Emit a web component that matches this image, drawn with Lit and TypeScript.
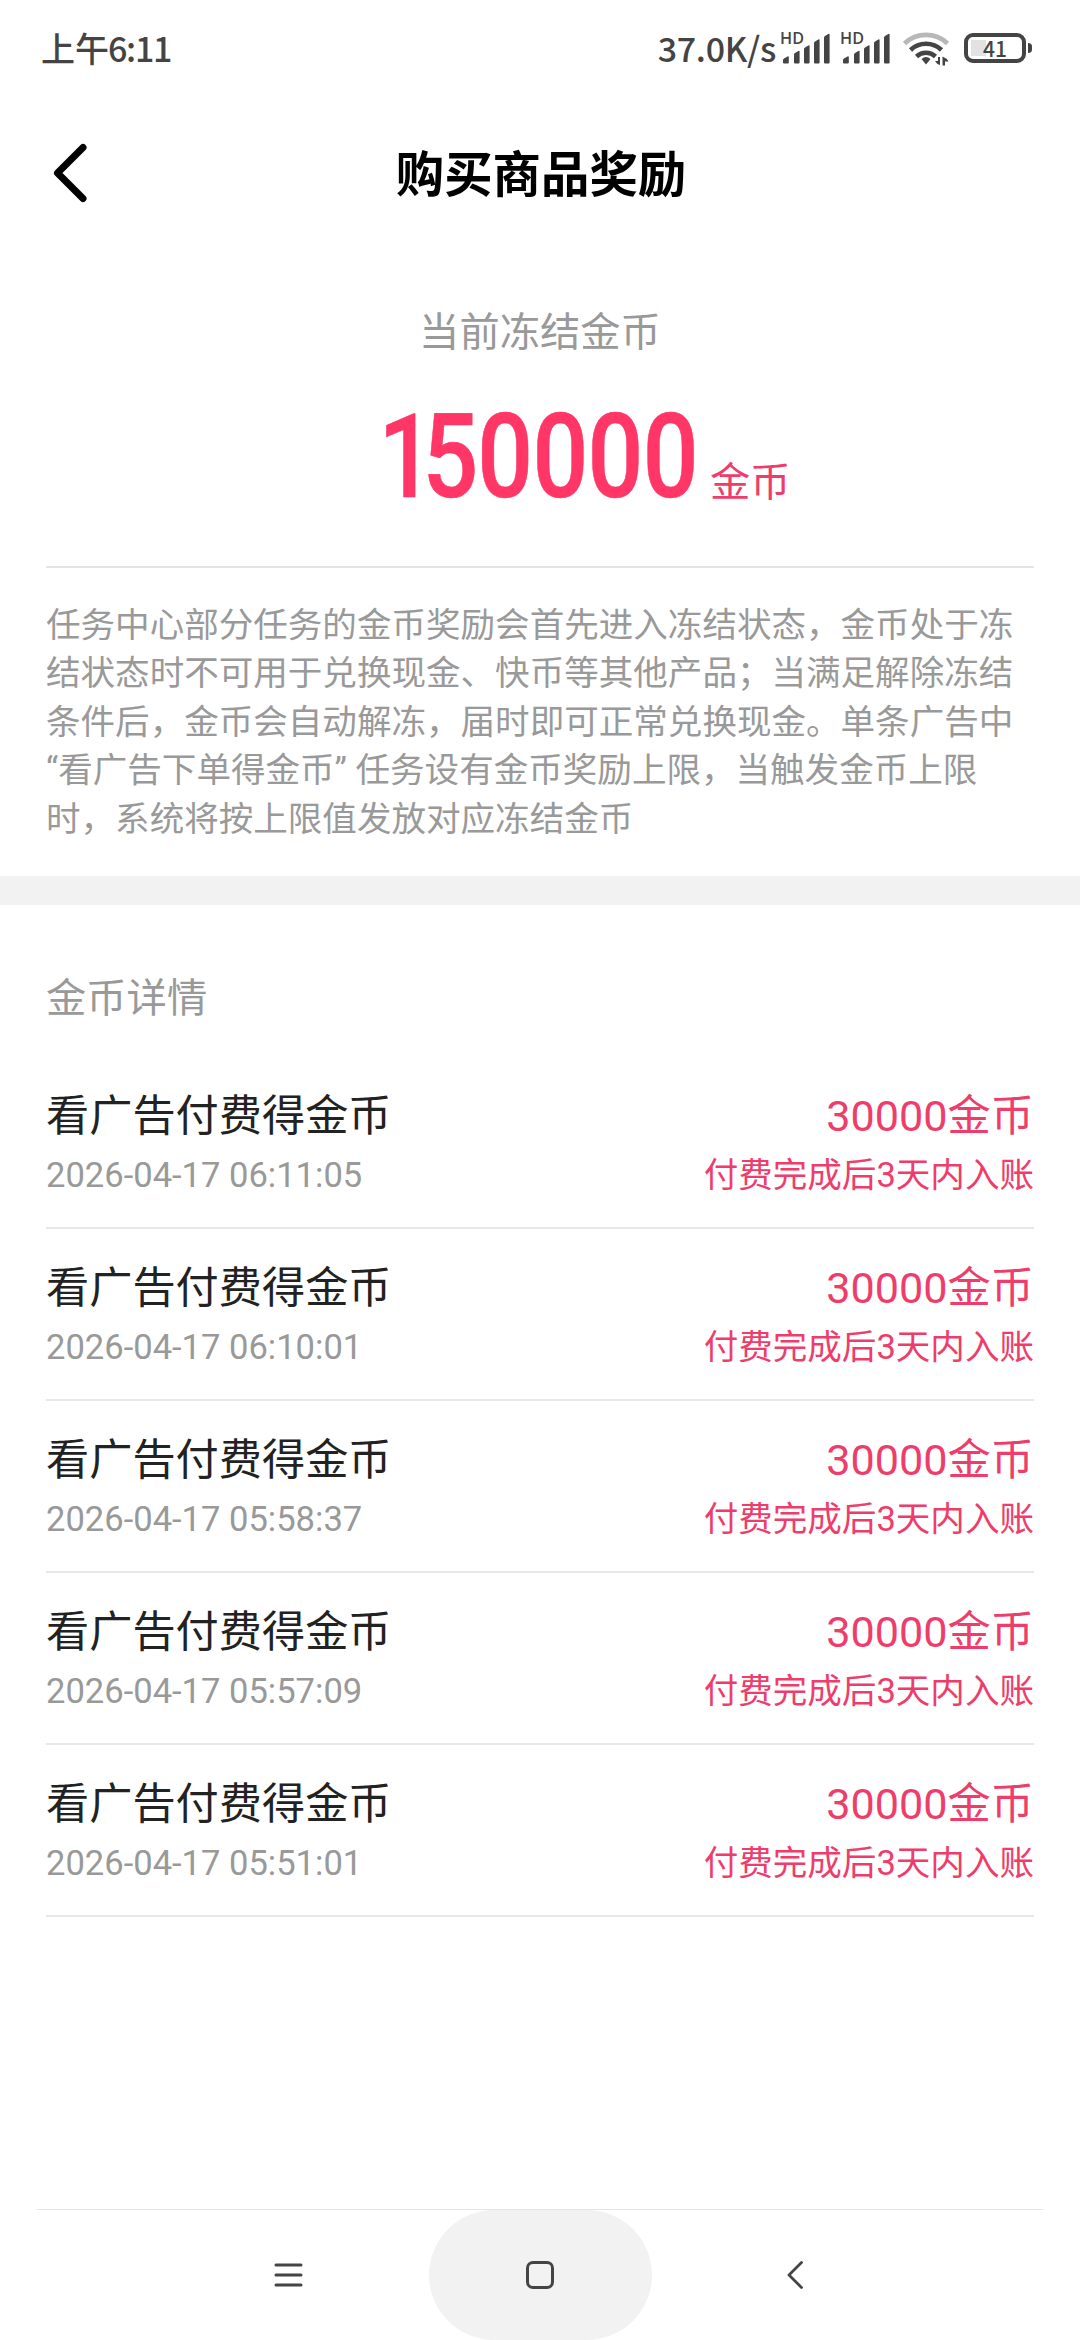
import { LitElement, html, css, svg } from "lit";
import { customElement } from "lit/decorators.js";

const signalBars = svg`
  <path d="M2 27.500v-2.500q0-1 1-1.500l3.500-2q1.300-.5 1.300.5v5.500q0 1-1 1h-3.800q-1 0-1-1z"/>
  <path d="M13 27.500v-8q0-1 1-1.500l3.300-2q1.300-.6 1.300.5v11q0 1-1 1h-3.600q-1 0-1-1z"/>
  <path d="M23 27.500v-13.500q0-1 1-1.500l3.300-2q1.300-.6 1.300.5v16.500q0 1-1 1h-3.600q-1 0-1-1z"/>
  <path d="M33 27.500v-19.500q0-1 1-1.500l3.300-2q1.300-.6 1.300.5v22.500q0 1-1 1h-3.600q-1 0-1-1z"/>
  <path d="M43 27.500v-25q0-1 1-1.500l3.300-2q1.300-.6 1.300.5v28q0 1-1 1h-3.600q-1 0-1-1z"/>`;

const records = [
  "2026-04-17 06:11:05",
  "2026-04-17 06:10:01",
  "2026-04-17 05:58:37",
  "2026-04-17 05:57:09",
  "2026-04-17 05:51:01",
];

@customElement("app-root")
export class AppRoot extends LitElement {
  static styles = css`
    :host {
      display: flex;
      flex-direction: column;
      width: 1080px;
      height: 2340px;
      overflow: hidden;
      background: #fff;
      color: #222;
      font-family: Roboto, "Noto Sans CJK SC", sans-serif;
    }
    * { box-sizing: border-box; }
    svg { display: block; overflow: visible; flex: none; }
    .status {
      display: flex;
      align-items: center;
      height: 96px;
      padding: 0 48px 0 41px;
      color: #444;
      font: 500 34px/40px "Noto Sans CJK SC", sans-serif;
    }
    .time { flex: 1; white-space: nowrap; }
    .clock { letter-spacing: -1.3px; margin-left: -1px; }
    .status svg { fill: #444; }
    .speed { letter-spacing: -.3px; margin-right: 5px; }
    .bars { margin-right: 10px; }
    .hd { font: 600 16.800px "Open Sans", sans-serif; }
    .wifi { margin: 0 15px 0 2px; }
    .charge { font: 500 22px "Noto Sans CJK SC", sans-serif; }
    .head {
      display: grid;
      grid-template-columns: 120px 1fr 120px;
      align-items: center;
      height: 154px;
    }
    .back { margin-left: 54px; }
    .title {
      margin: 0;
      padding: 5px 0 0 2px;
      text-align: center;
      color: #000;
      font-size: 48.4px;
      line-height: 60px;
      font-weight: 700;
    }
    .summary { padding: 53px 46px 0; height: 316px; }
    .label { color: #999; font-size: 40.3px; line-height: 60px; text-align: center; }
    .total {
      display: grid;
      grid-template-columns: 1fr 304px 1fr;
      height: 154px;
      margin-top: 33px;
      color: #ff3666;
    }
    .total svg { grid-column: 2; }
    .digits { font: 500 117px Roboto, sans-serif; fill: #ff3666; stroke: #ff3666; stroke-width: .6px; }
    .unit { color: #ee3d6b; font-size: 40.3px; line-height: 60px; padding: 57px 0 0 18px; }
    .rule { height: 2px; margin: 0 46px; background: #e4e4e4; }
    .note {
      margin: 0;
      height: 308px;
      padding: 33px 46px 0;
      color: #999;
      font-size: 34.56px;
      line-height: 48.4px;
    }
    .band { height: 29px; background: #f2f2f2; }
    .list { flex: 1; padding: 64px 46px 0; }
    .caption { color: #999; font-size: 40.3px; line-height: 60px; height: 88px; }
    .row {
      display: flex;
      justify-content: space-between;
      height: 172px;
      padding-top: 30px;
      border-bottom: 2px solid #e8e8e8;
      white-space: nowrap;
    }
    .name { font-size: 43.2px; line-height: 60px; }
    .sub { font-size: 34.56px; line-height: 48px; margin-top: 4px; color: #999; }
    .right { text-align: right; color: #ee3d6b; }
    .right .sub { color: #ee3d6b; }
    .nav {
      display: grid;
      grid-template-columns: 1fr 223px 1fr;
      height: 131px;
      margin: 0 37px;
      border-top: 1px solid #e4e4e4;
    }
    .key { display: flex; align-items: center; justify-content: center; }
    .home { background: #f2f2f2; border-radius: 65px; }
    .menu { justify-content: flex-start; padding-left: 237px; }
    .prev { justify-content: flex-end; padding-right: 240px; }
    .nav svg, .back { fill: none; stroke: #444; stroke-linecap: round; stroke-linejoin: round; }
    .back { stroke: #000; }
  `;

  render() {
    return html`
      <div class="status">
        <span class="time">上午<span class="clock">6:11</span></span>
        <span class="speed">37.0K/s</span>
        ${[0, 1].map(() => html`
          <svg class="bars" width="50" height="32" viewBox="0 -3 50 32">
            <text class="hd" x="-1" y="9" textLength="24" lengthAdjust="spacingAndGlyphs">HD</text>${signalBars}
          </svg>`)}
        <svg class="wifi" width="46" height="34" viewBox="0 0 46 34">
          <g fill="none" stroke="#444" stroke-width="4.600">
            <path d="M1.500 12.500a31 31 0 0 1 43 0" stroke="#b8b8b8"/>
            <path d="M7.500 19a22.500 22.500 0 0 1 31 0"/>
            <path d="M13.500 25.500a14 14 0 0 1 19 0"/>
          </g>
          <path d="M18.500 28q4.500-4 9 0l-4.500 5.500z"/>
          <path d="M37 26v8q-3.500-1-5-4h3v-4zM39.500 34.500v-9q4 1.500 6 5h-3.500v4z"/>
        </svg>
        <svg width="68" height="30" viewBox="0 0 68 30">
          <rect x="7" y="7" width="15" height="16" fill="#e2e2e2"/>
          <rect x="2" y="2" width="58" height="26" rx="7" fill="none" stroke="#444" stroke-width="4"/>
          <path d="M64 10q4 0 4 3.500v3q0 3.500-4 3.500z"/>
          <text class="charge" x="31" y="24" text-anchor="middle" textLength="24" lengthAdjust="spacingAndGlyphs">41</text>
        </svg>
      </div>
      <div class="head">
        <svg class="back" width="33" height="58" viewBox="0 0 33 58">
          <path d="M29 3.500L3.500 29L29 54.500" stroke-width="7"/>
        </svg>
        <h1 class="title">购买商品奖励</h1>
      </div>
      <div class="summary">
        <div class="label">当前冻结金币</div>
        <div class="total">
          <svg width="304" height="110" viewBox="0 0 304 110">
            <text class="digits" y="100.500" transform="scale(.84 1)" x="-11.500 41 106.200 171.900 237.600 303.200">150000</text>
          </svg>
          <span class="unit">金币</span>
        </div>
      </div>
      <div class="rule"></div>
      <p class="note">任务中心部分任务的金币奖励会首先进入冻结状态，金币处于冻结状态时不可用于兑换现金、快币等其他产品；当满足解除冻结条件后，金币会自动解冻，届时即可正常兑换现金。单条广告中<br>“看广告下单得金币” 任务设有金币奖励上限，当触发金币上限时，系统将按上限值发放对应冻结金币</p>
      <div class="band"></div>
      <div class="list">
        <div class="caption">金币详情</div>
        ${records.map((time) => html`
          <div class="row">
            <div>
              <div class="name">看广告付费得金币</div>
              <div class="sub">${time}</div>
            </div>
            <div class="right">
              <div class="name">30000金币</div>
              <div class="sub">付费完成后3天内入账</div>
            </div>
          </div>`)}
      </div>
      <div class="nav">
        <div class="key menu">
          <svg width="29" height="24" viewBox="0 0 29 24"><path d="M2 2H27M2 12H27M2 22H27" stroke-width="3"/></svg>
        </div>
        <div class="key home">
          <svg width="28" height="28" viewBox="0 0 28 28"><rect x="1.500" y="1.500" width="25" height="25" rx="5.500" stroke-width="3"/></svg>
        </div>
        <div class="key prev">
          <svg width="16" height="28" viewBox="0 0 16 28"><path d="M14.500 1.500L2 14L14.500 26.500" stroke-width="2.800"/></svg>
        </div>
      </div>
    `;
  }
}
